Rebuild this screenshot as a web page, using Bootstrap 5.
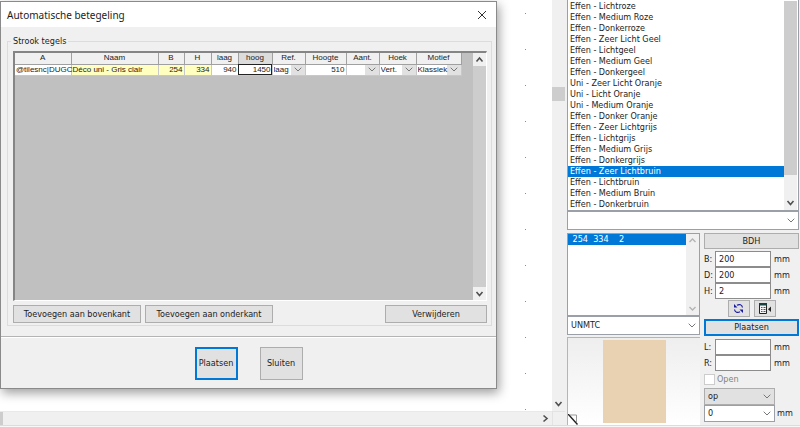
<!DOCTYPE html>
<html lang="nl">
<head>
<meta charset="utf-8">
<meta name="viewport" content="width=device-width, initial-scale=1">
<title>Automatische betegeling</title>
<link href="https://cdn.jsdelivr.net/npm/bootstrap@5.3.0/dist/css/bootstrap.min.css" rel="stylesheet">
<style>
:root{--face:#f0f0f0;--btn:#e1e1e1;--edge:#adadad;--thumb:#cdcdcd;--blue:#0078d7;
--chev:url("data:image/svg+xml,%3Csvg xmlns='http://www.w3.org/2000/svg' viewBox='0 0 8 5'%3E%3Cpath d='M.7.7 4 4 7.3.7' fill='none' stroke='%23777'/%3E%3C/svg%3E")}
body{background:var(--face);color:#1c1c1c;font-family:"DejaVu Sans Condensed","Noto Sans",sans-serif;font-size:9px;line-height:11px}
button,input,select{font:inherit;color:inherit;border-radius:0}
svg{display:block}
/* drawing area */
.workspace{background:var(--face)}
.canvas-area{background:#fff}
.dot-column{width:1px;margin-right:26px;margin-top:13px;background:repeating-linear-gradient(#8c8c8c 0,#8c8c8c 1px,transparent 1px,transparent 36px)}
.sbar{background:var(--face);width:13px}
.sbar-h{background:var(--face);height:14px;border-top:1px solid #e9e9e9}
.sthumb{background:var(--thumb)}
.sarrow{height:13px;width:13px}
.corner{width:13px;height:14px;border:solid #e3e3e3;border-width:1px 0 0 1px}
.vthumb{height:14px;margin-top:87px}
/* dialog */
.dialog-box{width:497px;top:1px;left:0;background:var(--face);border:1px solid #8a8a8a;box-shadow:2px 4px 10px rgba(0,0,0,.38)}
.title-row{height:25px;background:#fff;padding:0 9px 0 6px}
.title-row h1{font-family:"Noto Sans",sans-serif;font-size:10px;line-height:16px}
.group-box{margin:8px 4px 0 6px;padding:0 4px 2px 5px;border:1px solid #dcdcdc;min-width:0}
.group-box legend{font-size:9px;line-height:12px;margin:0 0 0 -2px;padding:0 2px}
.grid-frame{height:250px;margin-top:4px;background:#c0c0c0;border:solid;border-width:2px 1px 1px 2px;border-color:#858585 #fff #fff #858585}
.grid-table{width:446px;table-layout:fixed;border-collapse:collapse;font-family:"Liberation Sans",sans-serif;font-size:8px;line-height:10px}
.grid-table th{height:11px;padding:0;font-weight:400;text-align:center;background:var(--face);border:solid #a0a0a0;border-width:0 1px 1px 0;white-space:nowrap}
.grid-table td{height:11px;padding:0 1px;background:#fff;border:solid #c8c8c8;border-width:0 1px 1px 0;white-space:nowrap}
.grid-table .yel{background:#ffffc0}
.grid-table .hot{background:#dcdcdc}
.grid-table input{width:100%;height:10px;border:0;padding:0;text-align:right;background:none;display:block}
.grid-table td.current{outline:1px solid #222;outline-offset:-1px}
.grid-table select{appearance:none;width:100%;height:10px;border:0;padding:0;display:block;background:var(--chev) right 3px center/8px 5px no-repeat,linear-gradient(var(--btn),var(--btn)) right/14px 100% no-repeat #fff}
.grid-table td.pick{padding-right:0}
.push{background:var(--btn);border:1px solid var(--edge);padding:0;text-align:center}
.push-wide{height:18px;width:128px}
.push-end{width:102px}
.push-main{border:2px solid var(--blue)}
.push-tall{width:43px;height:33px}
.foot-row{margin-top:10px;border-top:1px solid #b4b4b4;padding:10px 0 8px;gap:22px;box-shadow:inset 0 1px #fff}
/* side panel */
.side{width:233px;margin-left:2px;padding-right:1px}
.sunk{background:#fff;border:1px solid #9a9fa8}
.color-list{padding:1px 1px 0 0}
.rows button{display:block;width:100%;height:11px;padding:0 0 0 2px;border:0;background:none;text-align:left;white-space:pre}
.rows button.picked{background:var(--blue);color:#fff}
.drop{appearance:none;display:block;width:100%;height:19px;padding:0 16px 0 3px;border:1px solid #9a9fa8;background:var(--chev) right 3px center/8px 5px no-repeat #fff}
.drop-s{width:71px;height:17px}
.drop-grey{background-color:var(--btn);border-color:var(--edge)}
.panel-grid{gap:4px;padding-top:3px}
.small-col{width:133px}
.size-list{height:83px}
.field-row{display:grid;grid-template-columns:11px 56px 1fr;align-items:center}
.field-row input{width:100%;height:16px;border:1px solid #8c8c8c;padding:0 3px;background:#fff}
.field-row span{padding-left:3px}
.push-bar{height:16px}
.push-bar-main{height:17px}
.gap-xs{margin-top:1px}
.gap-s{margin-top:2px}
.gap-m{margin-top:3px}
.tool-btn{width:22px;height:17px;display:flex;align-items:center;justify-content:center}
.preview{height:88px;border:solid #b5b5b5;border-width:1px 0 0 1px;background:linear-gradient(#eee,#fff)}
.tile{width:63px;height:83px;background:#e8d2b2}
.tick-line{gap:2px;color:#838383}
.unit{padding-left:2px}
.tick{appearance:none;width:11px;height:11px;border:1px solid #ccc;background:#fff;margin:0}
.status-line{height:2px;border-top:1px solid #dcdcdc;background:#f7f7f7}
</style>
</head>
<body>
<div class="d-flex flex-column vh-100 overflow-hidden">
<div class="d-flex flex-grow-1 overflow-hidden">

<main class="workspace position-relative d-flex flex-grow-1">
  <div class="d-flex flex-column flex-grow-1">
    <div class="canvas-area d-flex justify-content-end flex-grow-1"><div class="dot-column"></div></div>
    <div class="sbar-h d-flex justify-content-between">
      <div class="sthumb" style="width:3px"></div>
      <div class="sarrow"><svg width="13" height="13"><path d="M4.500 3.500 8 6.500 4.500 9.500" fill="none" stroke="#505050" stroke-width="1.600"/></svg></div>
    </div>
  </div>
  <div class="sbar d-flex flex-column justify-content-between">
    <div class="sthumb vthumb"></div>
    <div>
      <div class="sarrow"><svg width="13" height="13"><path d="M3.500 4 6.500 7.500 9.500 4" fill="none" stroke="#505050" stroke-width="1.600"/></svg></div>
      <div class="corner"></div>
    </div>
  </div>

  <section class="dialog-box position-absolute" role="dialog" aria-labelledby="dlg-title">
    <div class="title-row d-flex align-items-center justify-content-between">
      <h1 id="dlg-title" class="m-0 fw-normal">Automatische betegeling</h1>
      <button type="button" class="border-0 bg-transparent p-0" aria-label="Sluiten"><svg width="10" height="10"><path d="M1 1 9 9M9 1 1 9" stroke="#333" fill="none"/></svg></button>
    </div>
    <fieldset class="group-box">
      <legend class="float-none w-auto">Strook tegels</legend>
      <div class="grid-frame d-flex justify-content-between">
        <div>
        <table class="grid-table">
          <colgroup><col style="width:56px"><col style="width:87px"><col style="width:26px"><col style="width:27px"><col style="width:27px"><col style="width:34px"><col style="width:33px"><col style="width:41px"><col style="width:33px"><col style="width:37px"><col style="width:45px"></colgroup>
          <thead><tr><th>A</th><th>Naam</th><th>B</th><th>H</th><th>laag</th><th class="hot">hoog</th><th>Ref.</th><th>Hoogte</th><th>Aant.</th><th>Hoek</th><th>Motief</th></tr></thead>
          <tbody><tr>
            <td>@tilesnc|DUGC</td><td class="yel">Déco uni - Gris clair</td><td class="yel text-end">254</td><td class="yel text-end">334</td>
            <td><input aria-label="laag" value="940"></td><td class="current"><input aria-label="hoog" value="1450"></td>
            <td class="pick"><select aria-label="Ref."><option>laag</option></select></td>
            <td><input aria-label="Hoogte" value="510"></td>
            <td class="pick"><select aria-label="Aant."><option></option></select></td>
            <td class="pick"><select aria-label="Hoek"><option>Vert.</option></select></td>
            <td class="pick"><select aria-label="Motief"><option>Klassiek</option></select></td>
          </tr></tbody>
        </table>
        </div>
        <div class="sbar d-flex flex-column">
          <div class="sarrow"><svg width="13" height="13"><path d="M3.500 8.500 6.500 5 9.500 8.500" fill="none" stroke="#505050" stroke-width="1.600"/></svg></div>
          <div class="sthumb flex-grow-1"></div>
          <div class="sarrow"><svg width="13" height="13"><path d="M3.500 5 6.500 8.500 9.500 5" fill="none" stroke="#505050" stroke-width="1.600"/></svg></div>
        </div>
      </div>
      <div class="d-flex gap-1 mt-1">
        <button type="button" class="push push-wide">Toevoegen aan bovenkant</button>
        <button type="button" class="push push-wide">Toevoegen aan onderkant</button>
        <button type="button" class="push push-wide push-end ms-auto">Verwijderen</button>
      </div>
    </fieldset>
    <div class="foot-row d-flex justify-content-center">
      <button type="button" class="push push-tall push-main">Plaatsen</button>
      <button type="button" class="push push-tall">Sluiten</button>
    </div>
  </section>
</main>

<aside class="side flex-shrink-0">
  <div class="sunk color-list border-top-0 d-flex">
    <div class="rows flex-grow-1" role="listbox" aria-label="Kleuren">
      <button type="button">Effen - Lichtroze</button><button type="button">Effen - Medium Roze</button><button type="button">Effen - Donkerroze</button><button type="button">Effen - Zeer Licht Geel</button><button type="button">Effen - Lichtgeel</button><button type="button">Effen - Medium Geel</button><button type="button">Effen - Donkergeel</button><button type="button">Uni - Zeer Licht Oranje</button><button type="button">Uni - Licht Oranje</button><button type="button">Uni - Medium Oranje</button><button type="button">Effen - Donker Oranje</button><button type="button">Effen - Zeer Lichtgrijs</button><button type="button">Effen - Lichtgrijs</button><button type="button">Effen - Medium Grijs</button><button type="button">Effen - Donkergrijs</button><button type="button" class="picked">Effen - Zeer Lichtbruin</button><button type="button">Effen - Lichtbruin</button><button type="button">Effen - Medium Bruin</button><button type="button">Effen - Donkerbruin</button>
    </div>
    <div class="sbar d-flex flex-column justify-content-between">
      <div class="sthumb" style="height:174px"></div>
      <div class="sarrow"><svg width="13" height="13"><path d="M3.500 4 6.500 7.500 9.500 4" fill="none" stroke="#505050" stroke-width="1.600"/></svg></div>
    </div>
  </div>
  <select class="drop" aria-label="Filter"><option></option></select>
  <div class="panel-grid d-flex">
    <div class="small-col">
      <div class="sunk size-list d-flex">
        <div class="rows flex-grow-1" role="listbox" aria-label="Afmetingen"><button type="button" class="picked"> 254  334    2</button></div>
        <div class="sbar d-flex flex-column justify-content-between">
          <div class="sarrow"><svg width="13" height="13"><path d="M3.500 8 6.500 5 9.500 8" fill="none" stroke="#b4b4b4" stroke-width="1.400"/></svg></div>
          <div class="sarrow"><svg width="13" height="13"><path d="M3.500 5 6.500 8 9.500 5" fill="none" stroke="#b4b4b4" stroke-width="1.400"/></svg></div>
        </div>
      </div>
      <select class="drop" aria-label="Code"><option>UNMTC</option></select>
      <div class="preview gap-s position-relative d-flex align-items-center justify-content-center">
        <div class="tile"></div>
        <svg width="11" height="11" viewBox="0 0 11 11" class="position-absolute bottom-0 start-0"><path d="M2 1H8.500V8" fill="none" stroke="#999"/><path d="M0 0 9.500 10.500" stroke="#222" stroke-width="1.400"/></svg>
      </div>
    </div>
    <div class="flex-grow-1">
      <button type="button" class="push push-bar w-100 d-block">BDH</button>
      <div class="field-row gap-s"><label for="fb">B:</label><input id="fb" value="200"><span>mm</span></div>
      <div class="field-row"><label for="fd">D:</label><input id="fd" value="200"><span>mm</span></div>
      <div class="field-row"><label for="fh">H:</label><input id="fh" value="2"><span>mm</span></div>
      <div class="d-flex gap-1 gap-xs justify-content-center">
        <button type="button" class="push tool-btn" aria-label="Vernieuwen"><svg width="11" height="11" viewBox="0 0 11 11" fill="none" stroke="#1a1aa0" stroke-width="1.200"><path d="M4 2.200C6.500 .8 9 1.800 9.500 4.500M7 8.800C4.500 10.200 2 9.200 1.500 6.500"/><path d="M1 1V4.500H4.500ZM10 10V6.500H6.500Z" fill="#1a1aa0" stroke="none"/></svg></button>
        <button type="button" class="push tool-btn" aria-label="Lijst"><svg width="12" height="11" viewBox="0 0 12 11"><path d="M.5.500H7.500V10.500H.5Z" fill="#f4f4f4" stroke="#222"/><path d="M0 0H8V2.500H0Z" fill="#164040"/><path d="M2 4.500H3.500M2 6.500H3.500M2 8.500H3.500" stroke="#a33"/><path d="M4.500 4.500H6.500M4.500 6.500H6.500M4.500 8.500H6.500" stroke="#286848"/><path d="M12 3.500V9L9 6.200Z" fill="#222"/></svg></button>
      </div>
      <button type="button" class="push push-main push-bar-main gap-s w-100 d-block">Plaatsen</button>
      <div class="field-row gap-m"><label for="fl">L:</label><input id="fl"><span>mm</span></div>
      <div class="field-row"><label for="fr">R:</label><input id="fr"><span>mm</span></div>
      <label class="tick-line d-flex align-items-center gap-m"><input type="checkbox" class="tick" disabled>Open</label>
      <select class="drop drop-s drop-grey gap-m" aria-label="Positie"><option>op</option></select>
      <div class="d-flex align-items-center"><select class="drop drop-s flex-shrink-0" aria-label="Waarde"><option>0</option></select><span class="unit">mm</span></div>
    </div>
  </div>
</aside>
</div>
<div class="status-line flex-shrink-0"></div>
</div>
<script src="https://cdn.jsdelivr.net/npm/bootstrap@5.3.0/dist/js/bootstrap.bundle.min.js"></script>
</body>
</html>
